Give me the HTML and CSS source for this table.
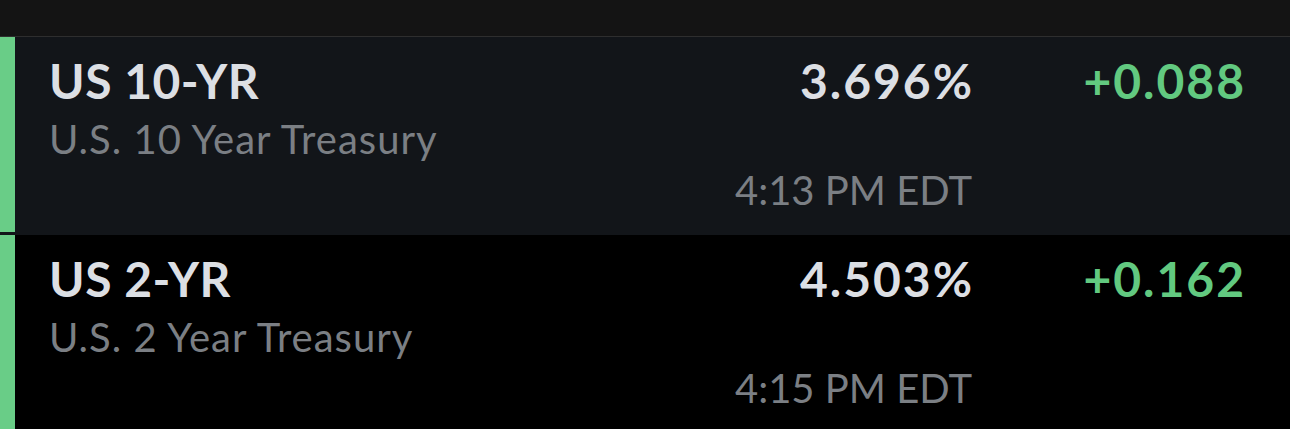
FILE: index.html
```html
<!DOCTYPE html>
<html>
<head>
<meta charset="utf-8">
<link rel="stylesheet" href="styles.css">
</head>
<body>
<div class="screen">
  <div class="topbar"></div>
  <div class="row row-active">
    <div class="marker"></div>
    <div class="cells">
      <div class="name">
        <div class="symbol">US 10-YR</div>
        <div class="desc">U.S. 10 Year Treasury</div>
      </div>
      <div class="quote">
        <div class="price">3.696%</div>
        <div class="time">4:13 PM EDT</div>
      </div>
      <div class="change">+0.088</div>
    </div>
  </div>
  <div class="row">
    <div class="marker"></div>
    <div class="cells">
      <div class="name">
        <div class="symbol">US 2-YR</div>
        <div class="desc">U.S. 2 Year Treasury</div>
      </div>
      <div class="quote">
        <div class="price">4.503%</div>
        <div class="time">4:15 PM EDT</div>
      </div>
      <div class="change">+0.162</div>
    </div>
  </div>
</div>
</body>
</html>
```

FILE: styles.css
```css
* { box-sizing: border-box; }
html, body {
  margin: 0;
  padding: 0;
  background: #000;
  height: 100%;
  overflow: hidden;
}
.screen {
  width: 1290px;
  height: 429px;
  font-family: "Lato", "Liberation Sans", sans-serif;
  background: #000;
}
.topbar {
  height: 37px;
  background: #141414;
  border-bottom: 1px solid #2e2e2e;
}
.row {
  display: flex;
  height: 198px;
  background: #000;
}
.row-active {
  background: #121519;
}
.marker {
  width: 15px;
  background: #69cd87;
  flex: none;
}
.row-active .marker {
  height: 195px;
}
.cells {
  flex: 1;
  display: grid;
  grid-template-columns: 1fr auto 272px;
  padding: 16px 46px 0 34px;
  align-items: start;
}
.symbol {
  font-size: 48px;
  line-height: 56px;
  font-weight: 700;
  letter-spacing: 0.5px;
  color: #dcdfe4;
}
.desc {
  font-size: 40px;
  line-height: 60px;
  letter-spacing: 1px;
  color: #7b7f84;
}
.quote {
  text-align: right;
}
.price {
  font-size: 48px;
  line-height: 56px;
  font-weight: 700;
  letter-spacing: 2px;
  margin-right: -2px;
  color: #dcdfe4;
}
.time {
  margin-top: 51px;
  font-size: 40px;
  line-height: 60px;
  font-weight: 400;
  color: #7b7f84;
}
.change {
  text-align: right;
  font-size: 48px;
  line-height: 56px;
  font-weight: 700;
  letter-spacing: 2px;
  margin-right: -2px;
  color: #62c980;
}
```
